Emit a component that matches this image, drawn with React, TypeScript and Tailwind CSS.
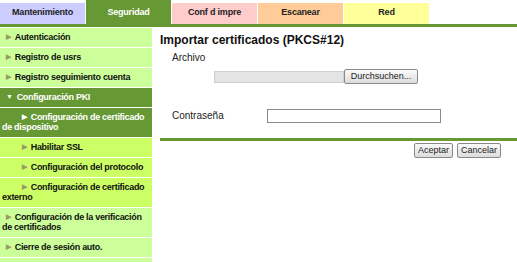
import React from "react";

type NavItem = {
  label: string;
  level: number;
  tone: "light" | "dark" | "lime";
  open?: boolean;
};

const tabs = [
  { label: "Mantenimiento", cls: "bg-[#ccccff] text-[#222] mt-[3px] h-[21px] pt-[3px]" },
  { label: "Seguridad", cls: "bg-[#669933] text-white h-[24px] pt-[6px]" },
  { label: "Conf d impre", cls: "bg-[#ffcccc] text-[#222] mt-[3px] h-[21px] pt-[3px]" },
  { label: "Escanear", cls: "bg-[#ffcc99] text-[#222] mt-[3px] h-[21px] pt-[3px]" },
  { label: "Red", cls: "bg-[#ffff99] text-[#222] mt-[3px] h-[21px] pt-[3px]" },
];

const navItems: NavItem[] = [
  { label: "Autenticación", level: 0, tone: "light" },
  { label: "Registro de usrs", level: 0, tone: "light" },
  { label: "Registro seguimiento cuenta", level: 0, tone: "light" },
  { label: "Configuración PKI", level: 0, tone: "dark", open: true },
  { label: "Configuración de certificado de dispositivo", level: 1, tone: "dark" },
  { label: "Habilitar SSL", level: 2, tone: "lime" },
  { label: "Configuración del protocolo", level: 2, tone: "lime" },
  { label: "Configuración de certificado externo", level: 1, tone: "lime" },
  { label: "Configuración de la verificación de certificados", level: 0, tone: "light" },
  { label: "Cierre de sesión auto.", level: 0, tone: "light" },
  { label: "Configuración de la contraseña", level: 0, tone: "light" },
];

const toneCls = {
  light: "bg-[#ccff99] text-[#111]",
  dark: "bg-[#669933] text-white",
  lime: "bg-[#ccff66] text-[#111]",
};

const indentCls = ["indent-[4px]", "indent-[20px]", "indent-[20px]"];

const Nav = () => (
  <div className="w-[152px] flex flex-col gap-[1px] pt-[1px]">
    {navItems.map((item) => (
      <div
        key={item.label}
        className={`${toneCls[item.tone]} ${indentCls[item.level]} pl-[2px] pr-[4px] pt-[4px] pb-[5px] text-[9px] tracking-[-0.3px] leading-[10px] font-bold`}>
        <span
          className={`inline-block align-top h-[10px] leading-[10px] indent-0 text-[7px] mr-[4px] ${item.tone === "dark" ? "text-white" : "text-[#999966]"}`}>
          {item.open ? "▼" : "▶"}
        </span>
        {item.label}
      </div>
    ))}
  </div>
);

const Btn = ({ children, cls = "" }: { children: React.ReactNode; cls?: string }) => (
  <button
    className={`h-[15px] px-[3px] text-[9px] leading-[13px] text-[#222] bg-gradient-to-b from-[#fafafa] to-[#dcdcdc] border border-[#8a8a8a] rounded-[2px] ${cls}`}>
    {children}
  </button>
);

export default function App() {
  return (
    <div className="w-[517px] h-[262px] overflow-hidden bg-white font-['Liberation_Sans',Arial,sans-serif]">
      {/* tabs */}
      <div className="flex gap-[1px] h-[24px]">
        {tabs.map((t) => (
          <div
            key={t.label}
            className={`${t.cls} w-[85px] flex items-start justify-center text-[9px] tracking-[-0.2px] leading-[12px] font-bold`}>
            {t.label}
          </div>
        ))}
      </div>
      <div className="h-[3px] bg-[#669933]" />

      <div className="flex">
        <Nav />
        <div className="flex-1 pl-[8px] pt-[6px]">
          <div className="text-[12px] font-bold text-[#111] leading-[14px]">Importar certificados (PKCS#12)</div>
          <div className="pl-[12px] pt-[5px] text-[10px] text-[#222] leading-[12px]">Archivo</div>
          <div className="flex items-center pl-[54px] pt-[5px]">
            <div className="w-[130px] h-[12px] bg-[#e4e4e4] border border-[#d0d0d0]" />
            <Btn cls="w-[74px]">Durchsuchen...</Btn>
          </div>
          <div className="flex items-center pl-[12px] pt-[24px]">
            <span className="w-[95px] text-[10px] text-[#222]">Contraseña</span>
            <div className="w-[174px] h-[14px] border border-[#8a8a8a] bg-white" />
          </div>
          <div className="h-[3px] bg-[#669933] mt-[15px]" />
          <div className="flex justify-end gap-[4px] pr-[16px] pt-[2px]">
            <Btn>Aceptar</Btn>
            <Btn>Cancelar</Btn>
          </div>
        </div>
      </div>
    </div>
  );
}
